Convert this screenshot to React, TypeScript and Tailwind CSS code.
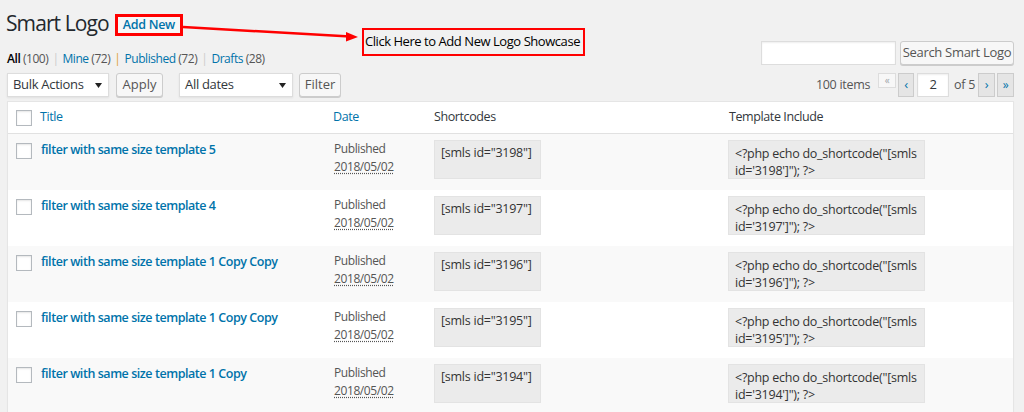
import React from "react";

const rows = [
  { t: "filter with same size template 5", id: "3198" },
  { t: "filter with same size template 4", id: "3197" },
  { t: "filter with same size template 1 Copy Copy", id: "3196" },
  { t: "filter with same size template 1 Copy Copy", id: "3195" },
  { t: "filter with same size template 1 Copy", id: "3194" },
];

function Checkbox() {
  return (
    <div className="w-[16px] h-[16px] border border-[#b4b9be] bg-white shadow-[inset_0_1px_2px_rgba(0,0,0,0.1)]" />
  );
}

function Select({ label, w }: { label: string; w: string }) {
  return (
    <div
      className={`${w} h-[24px] bg-white border border-[#ddd] shadow-[0_1px_2px_rgba(0,0,0,0.07)] flex items-center justify-between pl-[5px] pr-[6px] text-[13px] text-[#32373c] tracking-[-0.3px]`}
    >
      <span>{label}</span>
      <svg width="7" height="5" viewBox="0 0 7 5">
        <path d="M0 0 L7 0 L3.5 5 Z" fill="#222" />
      </svg>
    </div>
  );
}

function Button({ label, w }: { label: string; w: string }) {
  return (
    <div
      className={`${w} h-[24px] bg-[#f7f7f7] border border-[#ccc] rounded-[3px] shadow-[0_1px_0_#ccc] flex items-center justify-center text-[13px] text-[#555]`}
    >
      {label}
    </div>
  );
}

export default function App() {
  return (
    <div
      className="w-[1024px] h-[412px] bg-[#f1f1f1] overflow-hidden relative"
      style={{ fontFamily: '"Open Sans", "Noto Sans", sans-serif' }}
    >
      {/* annotation */}
      <svg className="absolute left-0 top-0" width="1024" height="80">
        <line x1="183" y1="27" x2="350" y2="36.5" stroke="#f00" strokeWidth="2.5" />
        <path d="M346 32 L358 37 L346 41.5 Z" fill="#f00" />
      </svg>
      <div className="absolute left-[362px] top-[28px] w-[223px] h-[28px] border-2 border-[#f00] flex items-center pl-[1px] text-[13px] text-black tracking-[-0.45px] whitespace-nowrap">
        Click Here to Add New Logo Showcase
      </div>

      {/* header */}
      <div className="h-[41px] flex items-start pt-[9px] pl-[6px]">
        <h1 className="text-[21px] leading-[29px] text-[#23282d] font-normal tracking-[-0.9px]">Smart Logo</h1>
        <div className="ml-[6px] mt-[5px] h-[22px] border-[3px] border-[#f00] bg-[#f7f7f7] flex items-center px-[5px] text-[12.5px] font-semibold text-[#0073aa] tracking-[-0.3px]">
          Add New
        </div>
      </div>

      {/* subsubsub + search */}
      <div className="h-[24px] flex justify-between pl-[7px] pr-[10px]">
        <div className="mt-[8px] h-[20px] leading-[20px] text-[12px] text-[#555] tracking-[-0.45px] flex">
          <span className="text-black font-semibold">All</span>
          <span>&nbsp;(100)</span>
          <span className="text-[#ccc] px-[4px]">|</span>
          <span className="text-[#0073aa]">Mine</span>
          <span>&nbsp;(72)</span>
          <span className="text-[#e0a040] px-[4px]">|</span>
          <span className="text-[#0073aa]">Published</span>
          <span>&nbsp;(72)</span>
          <span className="text-[#ccc] px-[4px]">|</span>
          <span className="text-[#0073aa]">Drafts</span>
          <span>&nbsp;(28)</span>
        </div>
        <div className="flex gap-[4px]">
          <div className="w-[135px] h-[24px] bg-white border border-[#ddd] shadow-[inset_0_1px_2px_rgba(0,0,0,0.07)]" />
          <Button label="Search Smart Logo" w="w-[114px] tracking-[-0.3px]" />
        </div>
      </div>

      {/* tablenav */}
      <div className="mt-[8px] h-[24px] flex items-start pl-[7px] pr-[10px]">
        <Select label="Bulk Actions" w="w-[102px]" />
        <div className="ml-[7px]">
          <Button label="Apply" w="w-[47px]" />
        </div>
        <div className="ml-[16px]">
          <Select label="All dates" w="w-[114px]" />
        </div>
        <div className="ml-[6px]">
          <Button label="Filter" w="w-[42px]" />
        </div>
        <div className="ml-auto flex items-start text-[12.5px] text-[#555] tracking-[-0.3px]">
          <span className="mt-[3px] leading-[18px]">100 items</span>
          <div className="ml-[8px] w-[18px] h-[15px] border border-[#ddd] bg-[#f7f7f7] text-[#a0a5aa] text-[10px] leading-[12px] flex justify-center">
            «
          </div>
          <div className="ml-[2px] w-[16px] h-[24px] border border-[#ccc] bg-[#e5e5e5] text-[#0073aa] text-[13px] flex items-center justify-center">
            ‹
          </div>
          <div className="ml-[3px] w-[32px] h-[24px] border border-[#ddd] bg-white text-[13px] text-[#32373c] flex items-center justify-center shadow-[inset_0_1px_2px_rgba(0,0,0,0.07)]">
            2
          </div>
          <span className="ml-[5px] mt-[3px] leading-[18px]">of 5</span>
          <div className="ml-[3px] w-[17px] h-[24px] border border-[#ccc] bg-[#e5e5e5] text-[#0073aa] text-[13px] flex items-center justify-center">
            ›
          </div>
          <div className="ml-[2px] w-[17px] h-[24px] border border-[#ccc] bg-[#e5e5e5] text-[#0073aa] text-[12px] flex items-center justify-center">
            »
          </div>
        </div>
      </div>

      {/* table */}
      <div className="mt-[4px] ml-[7px] w-[1007px] bg-white border border-[#e5e5e5] shadow-[0_1px_1px_rgba(0,0,0,0.04)]">
        <div className="h-[32px] border-b border-[#e1e1e1] flex items-center text-[12.5px] tracking-[-0.4px]">
          <div className="w-[32px] pl-[8px]">
            <Checkbox />
          </div>
          <div className="w-[293px] text-[#0073aa]">Title</div>
          <div className="w-[101px] text-[#0073aa]">Date</div>
          <div className="w-[295px] text-[#32373c]">Shortcodes</div>
          <div className="text-[#32373c]">Template Include</div>
        </div>
        {rows.map((r, i) => (
          <div
            key={i}
            className={`h-[56px] flex items-start ${i % 2 === 0 ? "bg-[#f9f9f9]" : "bg-white"}`}
          >
            <div className="w-[32px] pl-[8px] pt-[9px]">
              <Checkbox />
            </div>
            <div className="w-[293px] pt-[6px] pl-[1px] leading-[20px] text-[12.5px] font-semibold text-[#0073aa] tracking-[-0.45px]">
              {r.t}
            </div>
            <div className="w-[101px] pt-[6px] pl-[1px] text-[12px] leading-[18px] text-[#555] tracking-[-0.4px]">
              <div>Published</div>
              <div className="underline decoration-dotted underline-offset-2">2018/05/02</div>
            </div>
            <div className="w-[294px] pt-[6px]">
              <div className="w-[107px] h-[39px] bg-[#ebebeb] border border-[#e3e3e3] pl-[6px] pt-[3px] text-[12.5px] leading-[17px] text-[#333] tracking-[-0.25px]">
                [smls id="{r.id}"]
              </div>
            </div>
            <div className="pt-[6px]">
              <div className="w-[197px] h-[39px] bg-[#ebebeb] border border-[#e3e3e3] pl-[6px] pt-[4px] text-[12.5px] leading-[17px] text-[#333] tracking-[-0.25px]">
                <div>&lt;?php echo do_shortcode("[smls</div>
                <div>id='{r.id}']"); ?&gt;</div>
              </div>
            </div>
          </div>
        ))}
      </div>
    </div>
  );
}
